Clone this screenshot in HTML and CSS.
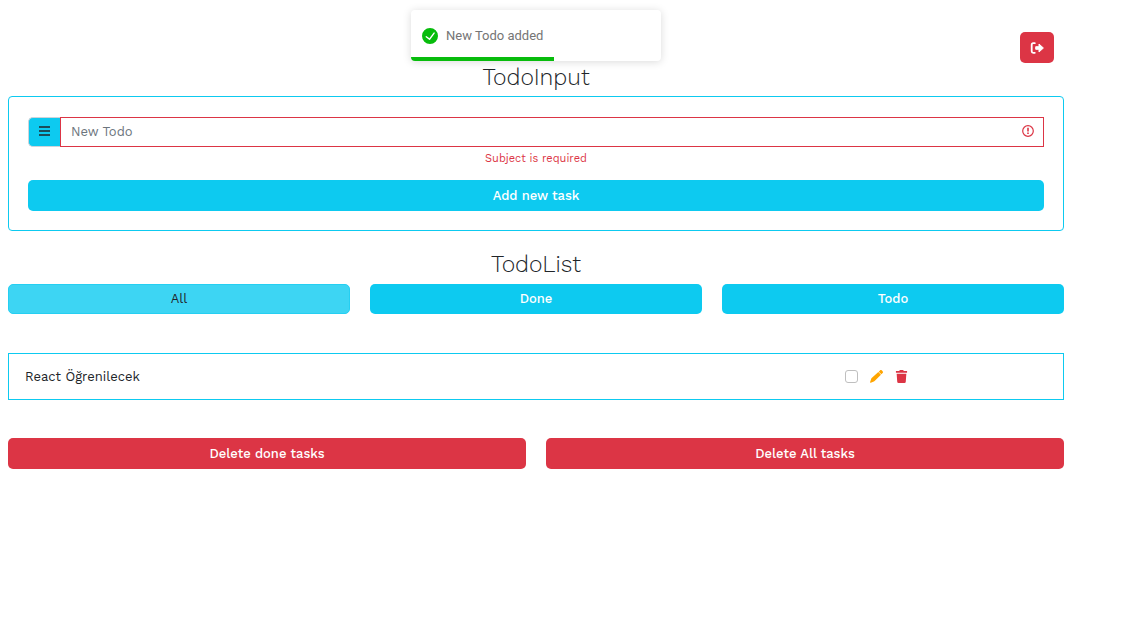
FILE: index.html
```html
<!DOCTYPE html>
<html lang="en">
<head>
<meta charset="utf-8">
<meta name="viewport" content="width=device-width, initial-scale=1">
<title>Todo</title>
<link rel="stylesheet" href="styles.css">
</head>
<body>
<div class="toast" role="status">
  <svg class="toast-icon" viewBox="0 0 24 24" aria-hidden="true"><path fill="#07bc0c" d="M12 0a12 12 0 1012 12A12.014 12.014 0 0012 0zm6.927 8.2l-6.845 9.289a1.011 1.011 0 01-1.43.188l-4.888-3.908a1 1 0 111.25-1.562l4.076 3.261 6.227-8.451a1 1 0 111.61 1.183z"/></svg>
  <span>New Todo added</span>
  <div class="toast-progress"></div>
</div>
<main class="page">
  <header class="topbar">
    <button class="btn btn-danger logout" type="button" aria-label="Log out">
      <svg viewBox="0 0 14 12" aria-hidden="true"><path fill="none" stroke="#fff" stroke-width="1.800" stroke-linecap="round" d="M4.800 1.200H3.200Q1.700 1.200 1.700 2.700V9.300Q1.700 10.800 3.200 10.800H4.800"/><path fill="#fff" stroke="#fff" stroke-linejoin="round" d="M5.700 4.700H9V2L13.400 6 9 10V7.300H5.700z"/></svg>
    </button>
  </header>
  <h1 class="title">TodoInput</h1>
  <form class="panel">
    <div class="input-row">
      <span class="addon"><svg viewBox="0 0 11 10" aria-hidden="true"><path stroke="#212529" stroke-width="1.500" d="M0 1h11M0 5h11M0 9h11"/></svg></span>
      <div class="field">
        <input class="text-input" type="text" placeholder="New Todo" aria-label="New Todo" aria-describedby="subject-error">
        <svg class="error-icon" viewBox="0 0 12 12" aria-hidden="true"><circle cx="6" cy="6" r="5.300" fill="none" stroke="#dc3545" stroke-width="1.200"/><path stroke="#dc3545" stroke-width="1.600" d="M6 2.800v3.800M6 7.600v1.500"/></svg>
      </div>
    </div>
    <p class="error" id="subject-error">Subject is required</p>
    <button class="btn btn-info" type="button">Add new task</button>
  </form>
  <h1 class="title">TodoList</h1>
  <div class="filters">
    <div class="filter"><button class="btn btn-info active" type="button">All</button></div>
    <div class="filter"><button class="btn btn-info" type="button">Done</button></div>
    <div class="filter"><button class="btn btn-info" type="button">Todo</button></div>
  </div>
  <ul class="list">
    <li class="item">
      <label class="item-name" for="task-1">React Öğrenilecek</label>
      <div class="item-tools">
        <input class="check" type="checkbox" id="task-1">
        <button class="icon-btn" type="button" aria-label="Edit"><svg viewBox="0 0 512 512" aria-hidden="true"><path fill="#ffa500" d="M410.300 2.300c18-6 37 0 50 12l37 37c19 19 19 49 0 68l-49 49-104-104 49-49c5-6 11-10 17-13zM328 80l104 104-250 250c-8 8-18 14-29 17L30 500c-14 4-30-12-26-26l45-126c3-11 9-21 17-29z"/></svg></button>
        <button class="icon-btn" type="button" aria-label="Delete"><svg viewBox="0 0 14 14" aria-hidden="true"><path fill="#dc3545" d="M4.500 1 5 .3Q5.200 0 5.600 0H8.400Q8.800 0 9 .3L9.500 1H13V3H1V1zM1.800 4H12.200L11.600 12.700Q11.500 14 10.200 14H3.800Q2.500 14 2.400 12.700z"/></svg></button>
      </div>
    </li>
  </ul>
  <div class="bulk">
    <button class="btn btn-danger" type="button">Delete done tasks</button>
    <button class="btn btn-danger" type="button">Delete All tasks</button>
  </div>
</main>
</body>
</html>
```
FILE: styles.css
```css
* { box-sizing: border-box; }
body {
  margin: 0;
  background: #fff;
  color: #212529;
  font-family: "Work Sans", "Noto Sans", sans-serif;
  font-size: 13px;
  font-weight: 400;
  line-height: 20px;
}
svg { display: block; }
.page { padding: 32px 80px 32px 8px; }
.topbar { display: flex; justify-content: flex-end; padding-right: 10px; }
.title { margin: 0; font-size: 23px; font-weight: 350; line-height: 29px; text-align: center; }
.btn {
  display: block;
  width: 100%;
  padding: 5px 10px;
  border: 0;
  border-radius: 5px;
  color: #fff;
  font: inherit;
  font-weight: 500;
  line-height: 21px;
  cursor: pointer;
}
.btn-info { background: #0dcaf0; }
.btn-danger { background: #dc3545; }
.logout { width: 34px; height: 31px; }
.logout svg { width: 14px; height: 12px; }
.panel {
  margin: 4px 0 19px;
  padding: 20px 19px 19px;
  border: 1px solid #0dcaf0;
  border-radius: 4px;
}
.input-row { display: flex; height: 30px; }
.addon {
  display: flex;
  align-items: center;
  justify-content: center;
  width: 32px;
  padding-bottom: 2px;
  background: #0dcaf0;
  border: 1px solid #ced4da;
  border-right: 0;
  border-radius: 5px 0 0 5px;
}
.addon svg { width: 11px; height: 10px; }
.field { position: relative; flex: 1; }
.text-input {
  width: 100%;
  height: 100%;
  padding: 3px 32px 5px 10px;
  border: 1px solid #dc3545;
  border-radius: 0;
  color: #212529;
  font: inherit;
}
.text-input::placeholder { color: #6c757d; opacity: 1; }
.error-icon { position: absolute; right: 10px; top: 8px; width: 12px; height: 12px; }
.error { margin: 2px 0 11px; color: #dc3545; font-size: 11px; text-align: center; }
.filters { display: flex; margin-top: 5px; }
.filter { width: calc(100% / 3); padding: 0 10px; }
.filter:first-child { padding-left: 0; }
.filter:last-child { padding-right: 0; }
.filter .btn { line-height: 20px; }
.btn-info.active { padding: 4px 9px; background: #3dd5f3; border: 1px solid #25cff2; color: #212529; font-weight: 400; }
.list { margin: 39px 0 38px; padding: 0; list-style: none; }
.item {
  display: grid;
  grid-template-columns: 2fr 1fr;
  align-items: center;
  padding: 13px 16px;
  border: 1px solid #0dcaf0;
  line-height: 19px;
}
.item-tools { display: flex; justify-content: center; align-items: center; gap: 12px; }
.check { appearance: none; width: 13px; height: 13px; margin: 0; border: 1px solid #bfbfbf; border-radius: 3px; background: #fff; }
.icon-btn { padding: 0; border: 0; background: none; cursor: pointer; }
.icon-btn svg { width: 13px; height: 13px; }
.bulk { display: grid; grid-template-columns: 1fr 1fr; gap: 20px; }
.toast {
  position: absolute;
  top: 10px;
  left: calc(50% - 36px);
  z-index: 1;
  display: flex;
  align-items: center;
  gap: 8px;
  width: 250px;
  height: 51px;
  padding: 0 11px;
  overflow: hidden;
  transform: translateX(-50%);
  border-radius: 4px;
  background: #fff;
  box-shadow: 0 1px 8px rgba(0, 0, 0, 0.15);
  color: #757575;
  font-family: Roboto, sans-serif;
}
.toast-icon { width: 16px; height: 16px; }
.toast-progress { position: absolute; left: 0; bottom: 0; width: 57%; height: 4px; background: #07bc0c; }
```
